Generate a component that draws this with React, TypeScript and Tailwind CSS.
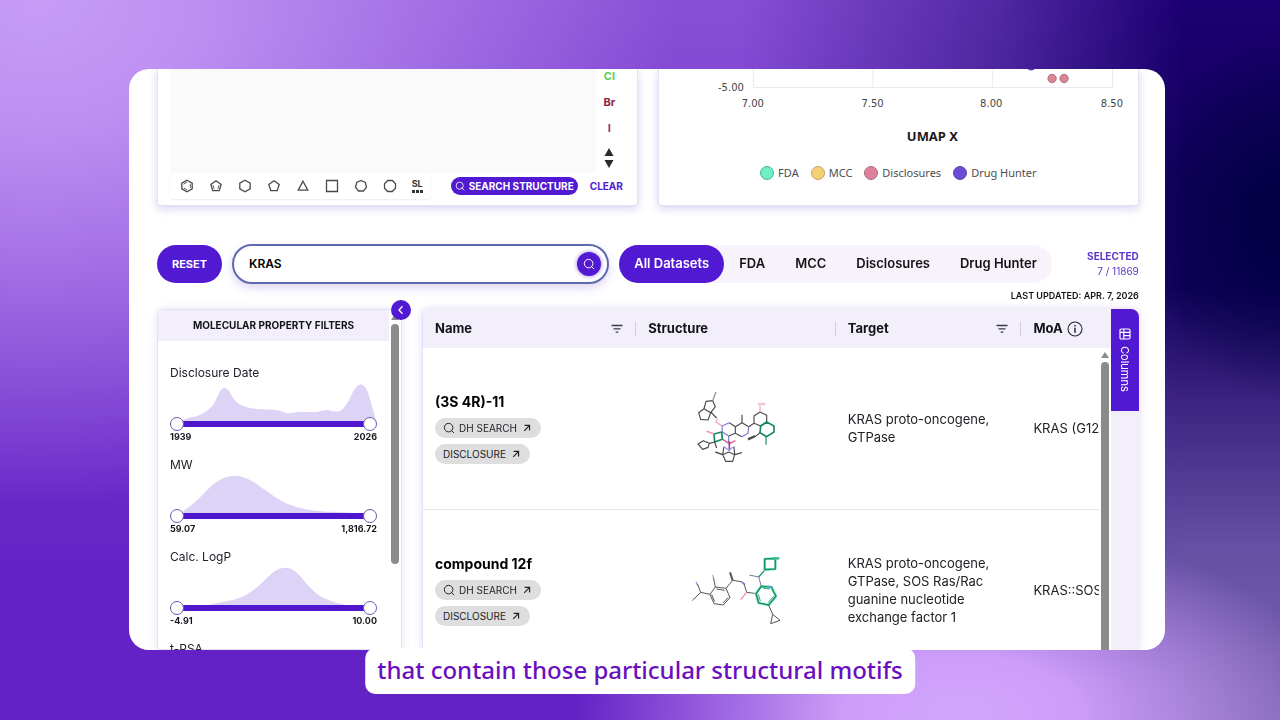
import { useState } from 'react';
import type { ReactNode } from 'react';

type Filter = {
  label: string;
  min: string;
  max: string;
  curve: string;
};

const filters: Filter[] = [
  {
    label: 'Disclosure Date',
    min: '1939',
    max: '2026',
    curve:
      'M90 246L95 238Q120 228 140 226Q170 214 187 195Q196 182 206 158Q214 141 223 141Q233 141 242 158Q252 178 266 188Q284 200 320 204L370 206Q392 208 405 215Q420 219 440 213L500 213Q520 207 535 207Q550 213 568 211Q580 208 597 178Q617 130 633 130Q648 130 660 174Q674 226 681 246Z'
  },
  {
    label: 'MW',
    min: '59.07',
    max: '1,816.72',
    curve:
      'M90 246L96 236C120 222 135 208 155 188C185 155 215 128 253 128C290 128 320 152 355 178C385 200 410 214 440 222C480 234 520 236 560 237L665 242L665 246Z'
  },
  {
    label: 'Calc. LogP',
    min: '-4.91',
    max: '10.00',
    curve:
      'M90 246L175 240C200 234 235 230 265 220C295 210 320 190 350 160C370 140 385 128 406 128C425 128 438 138 455 158C475 182 490 200 515 216C545 230 565 236 590 240L665 244L665 246Z'
  }
];

const legend = [
  { label: 'FDA', dot: 'bg-[#6ff0c4] border-[#4faf95]' },
  { label: 'MCC', dot: 'bg-[#f5cf74] border-[#c2a565]' },
  { label: 'Disclosures', dot: 'bg-[#de829c] border-[#a86f80]' },
  { label: 'Drug Hunter', dot: 'bg-[#6b4bd6] border-[#5a45a8]' }
];

const datasets = ['All Datasets', 'FDA', 'MCC', 'Disclosures', 'Drug Hunter'];

const rings: { name: string; shape: ReactNode }[] = [
  {
    name: 'Benzene',
    shape: (
      <>
        <path d="M7 1.2l5.2 2.9v5.800L7 12.800 1.800 9.900V4.100z" />
        <path d="M7 3.200L3.700 5.100M3.700 8.900l3.300 1.900M10.300 5.200v3.600" strokeWidth="0.900" />
      </>
    )
  },
  {
    name: 'Cyclopentadiene',
    shape: (
      <>
        <path d="M7 1.800l5.200 3.700-2 6.200H3.800l-2-6.200z" />
        <path d="M3.900 6.200l1.200 3.700M10.100 6.200l-1.200 3.700" strokeWidth="0.900" />
      </>
    )
  },
  { name: 'Cyclohexane', shape: <path d="M7 1.200l5.200 2.900v5.800L7 12.800 1.800 9.900V4.100z" /> },
  { name: 'Cyclopentane', shape: <path d="M7 1.800l5.200 3.700-2 6.200H3.800l-2-6.200z" /> },
  { name: 'Cyclopropane', shape: <path d="M7 2.200l4.800 9H2.200z" /> },
  { name: 'Cyclobutane', shape: <path d="M1.500 1.500h11v11h-11z" /> },
  { name: 'Cycloheptane', shape: <path d="M7 1.500l4.300 2 1.200 4.600-3 3.900h-5l-3-3.900 1.200-4.600z" /> },
  { name: 'Cyclooctane', shape: <path d="M4.700 1.500h4.600l3.200 3.200v4.600l-3.200 3.200H4.700L1.500 9.300V4.700z" /> }
];

function SearchIcon({ className }: { className: string }) {
  return (
    <svg viewBox="0 0 16 16" className={className} fill="none" stroke="currentColor" strokeWidth="1.3">
      <circle cx="7.500" cy="7.500" r="5.700" />
      <path d="M10.800 10.800l3.700 3.700" strokeLinecap="round" />
    </svg>
  );
}

function ArrowIcon() {
  return (
    <svg viewBox="0 0 10 10" className="h-2 w-2" fill="none" stroke="currentColor" strokeWidth="1.5">
      <path d="M1.500 8.500L8 2M2 1.800h6.200V8" />
    </svg>
  );
}

function FilterIcon() {
  return (
    <svg viewBox="0 0 12 10" className="h-2.5 w-3" stroke="#3a3844" strokeWidth="1.300">
      <path d="M0.500 1.500h11M2.500 4.800h7M4.700 8.100h2.600" />
    </svg>
  );
}

function MoleculeOne() {
  return (
    <svg viewBox="-12 0 360 300" className="mx-auto w-[120px]" fill="none" stroke="#4a4a50" strokeWidth="3.500" strokeLinejoin="round">
      <path d="M98 68L78 70 72 92 92 104 106 86zM72 92L56 104 62 124 84 126 92 104" />
      <path d="M92 102L110 120" />
      <path d="M98 68L108 42" stroke="#8d8da0" />
      <path d="M112 122L108 132 126 144" stroke="#f0a3ad" />
      <path d="M148 134L166 146 186 134 206 146M166 146V166M146 174L166 166 186 176" />
      <path d="M148 134L126 144 127 162 146 174" stroke="#7d78dc" />
      <path d="M206 146L204 166 186 176" stroke="#7d78dc" />
      <path d="M186 134V110M206 146L222 136M222 136V114L240 102 260 112V132L242 144 222 136" />
      <path d="M240 102V84" stroke="#f0a3ad" />
      <path d="M234 78H256" stroke="#f6c3ca" strokeWidth="8" />
      <path d="M242 144L260 132 282 144V162L260 176 240 164z" stroke="#168a63" strokeWidth="5" />
      <path d="M258 176V200" stroke="#168a63" />
      <path d="M240 164L226 176" />
      <path d="M226 174L204 184" strokeWidth="7" />
      <path d="M102 168L125 162 127 184 104 192z" stroke="#168a63" strokeWidth="5" />
      <path d="M102 168L80 160" stroke="#ee9aa6" strokeWidth="5" />
      <path d="M104 192L88 196M104 192L110 210M88 196L70 188 54 198 68 214 84 208z" />
      <path d="M146 174V194" stroke="#7d78dc" />
      <path d="M128 184L148 197 166 188" stroke="#e05a86" strokeWidth="4" />
      <path d="M148 190V218" stroke="#8e46ac" strokeWidth="5" />
      <path d="M128 230L132 206M128 230L137 250H158L164 230 162 206M146 222L128 230M146 222L164 230" />
      <path d="M128 230L106 222M164 230L186 224" strokeWidth="4" />
      <path d="M132 206L146 216 162 206" stroke="#9a90e0" />
    </svg>
  );
}

function MoleculeTwo() {
  return (
    <svg viewBox="-12 0 360 270" className="mx-auto w-[120px]" fill="none" stroke="#55555a" strokeWidth="3" strokeLinejoin="round">
      <path d="M106 126L138 130 150 158 130 180 102 176 90 148z" />
      <path d="M109 132L134 136M145 157L129 174M104 170L95 149" />
      <path d="M106 126L100 96M90 148L62 142M62 142L52 116M62 142L40 164" />
      <path d="M52 122L48 110M44 158L36 168M101 100L98 90" stroke="#9b8ad0" />
      <path d="M138 130L158 106" />
      <path d="M158 106L150 82" strokeWidth="6" />
      <path d="M158 106L184 110" />
      <path d="M184 110L194 118" stroke="#7b76d9" strokeWidth="5" />
      <path d="M192 116L200 142 230 146" />
      <path d="M200 142L182 164" stroke="#eb91a0" strokeWidth="4" />
      <path d="M244 124L274 126 288 154 266 180 236 174 228 146z" stroke="#bdf3df" strokeWidth="9" />
      <path d="M244 124L274 126 288 154 266 180 236 174 228 146z" stroke="#12966a" strokeWidth="5" />
      <path d="M250 130L270 132M281 154L264 173M241 168L235 148" stroke="#2ca37b" />
      <path d="M262 124L278 128" stroke="#4aa4c4" strokeWidth="5" />
      <path d="M244 124L236 96M236 96L208 90" stroke="#7d70ad" />
      <path d="M236 96L256 74" stroke="#12966a" strokeWidth="4" />
      <path d="M254 42L286 40V72L254 74z" stroke="#bdf3df" strokeWidth="9" />
      <path d="M254 42L286 40V72L254 74z" stroke="#12966a" strokeWidth="5" />
      <path d="M280 40H298" stroke="#3fc0a0" strokeWidth="8" />
      <path d="M266 180L278 208M278 208L300 226 272 236z" />
    </svg>
  );
}

const compounds = [
  {
    name: '(3S 4R)-11',
    structure: <MoleculeOne />,
    target: 'KRAS proto-oncogene, GTPase',
    moa: 'KRAS (G12'
  },
  {
    name: 'compound 12f',
    structure: <MoleculeTwo />,
    target: 'KRAS proto-oncogene, GTPase, SOS Ras/Rac guanine nucleotide exchange factor 1',
    moa: 'KRAS::SOS'
  }
];

const thumb =
  'pointer-events-none absolute inset-0 h-full w-full appearance-none bg-transparent outline-none [&::-webkit-slider-thumb]:pointer-events-auto [&::-webkit-slider-thumb]:h-3.5 [&::-webkit-slider-thumb]:w-3.5 [&::-webkit-slider-thumb]:appearance-none [&::-webkit-slider-thumb]:rounded-full [&::-webkit-slider-thumb]:border [&::-webkit-slider-thumb]:border-solid [&::-webkit-slider-thumb]:border-[#6c5aa8] [&::-webkit-slider-thumb]:bg-white';

function RangeFilter({ filter }: { filter: Filter }) {
  return (
    <div className="h-[92px]">
      <div className="text-xs leading-4 text-[#222029]">{filter.label}</div>
      <svg viewBox="60 126 621 120" preserveAspectRatio="none" className="mt-0.5 block h-10 w-full">
        <path d={filter.curve} fill="#ddd3f6" />
      </svg>
      <div className="relative -mt-1.5 h-3.5">
        <div className="absolute inset-x-1 top-1 h-1.5 bg-[#4f17cd]" />
        <input type="range" aria-label={`${filter.label} minimum`} min={0} max={100} defaultValue={0} className={thumb} />
        <input type="range" aria-label={`${filter.label} maximum`} min={0} max={100} defaultValue={100} className={thumb} />
      </div>
      <div className="flex justify-between text-[9px] leading-3 font-bold text-[#17151c]">
        <span>{filter.min}</span>
        <span>{filter.max}</span>
      </div>
    </div>
  );
}

function StructurePanel() {
  return (
    <section className="flex min-w-0 flex-col rounded-b border border-t-0 border-[#e6e0f5] bg-white px-3 pb-1.5 shadow-[0_3px_10px_rgba(90,50,200,0.22)]">
      <div className="flex h-[104px] pr-0.5">
        <div className="flex-1 bg-[#fafafa]" />
        <div className="flex w-[27px] flex-col items-center text-[11px] leading-[26px] font-bold">
          <button type="button" className="-mt-1.5 text-[#56cf58]">Cl</button>
          <button type="button" className="text-[#8b2340]">Br</button>
          <button type="button" className="text-[#77406f]">I</button>
          <svg viewBox="0 0 10 22" className="mt-1.5 h-[22px] w-2.5" fill="#2b2b2b">
            <path d="M5 1l4.500 8h-9zM5 21l4.500-8h-9z" />
          </svg>
        </div>
      </div>
      <div className="flex items-center">
        <div className="flex h-[26px] flex-1 items-center justify-between rounded-sm bg-white pr-2 pl-2.5 shadow-[0_1px_2px_rgba(0,0,0,0.08)]">
          {rings.map((ring) => (
            <button key={ring.name} type="button" aria-label={ring.name}>
              <svg viewBox="0 0 14 14" className="h-3.5 w-3.5" fill="none" stroke="#4a4a4a" strokeWidth="1.300">
                {ring.shape}
              </svg>
            </button>
          ))}
          <button type="button" className="flex flex-col items-center text-[9px] leading-2 font-bold text-[#333]">
            SL
            <span className="mt-0.5 flex gap-px">
              <span className="h-[3px] w-[3px] bg-[#333]" />
              <span className="h-[3px] w-[3px] bg-[#333]" />
              <span className="h-[3px] w-[3px] bg-[#333]" />
            </span>
          </button>
        </div>
        <button
          type="button"
          className="ml-5 flex h-[18px] items-center gap-1 rounded-full bg-[#5119d2] px-1 text-[10px] font-bold text-white"
        >
          <SearchIcon className="h-2.5 w-2.5" />
          SEARCH STRUCTURE
        </button>
        <button type="button" className="ml-3 pr-0.5 text-[10px] font-bold text-[#5119d2]">
          CLEAR
        </button>
      </div>
    </section>
  );
}

function UmapPanel() {
  return (
    <section className="min-w-0 rounded-b border border-t-0 border-[#e6e0f5] bg-white shadow-[0_3px_10px_rgba(90,50,200,0.22)]">
      <svg viewBox="0 0 480 90" className="block w-full" fontFamily="'DejaVu Sans', sans-serif" fontSize="10" fill="#444">
        <path d="M94.500 0V18.500M214.500 0V18.500M334.500 0V18.500M454.500 0V18.500M94.500 18.500H454.500" stroke="#ebebee" fill="none" />
        <circle cx="373" cy="-3" r="4.500" fill="#5a45c4" />
        <circle cx="394" cy="9.500" r="4.200" fill="#dc8394" stroke="#9c6271" strokeWidth="0.800" />
        <circle cx="406" cy="9.500" r="4.200" fill="#dc8394" stroke="#9c6271" strokeWidth="0.800" />
        <text x="85" y="22" textAnchor="end">-5.00</text>
        <text x="94" y="38" textAnchor="middle">7.00</text>
        <text x="214" y="38" textAnchor="middle">7.50</text>
        <text x="333" y="38" textAnchor="middle">8.00</text>
        <text x="454" y="38" textAnchor="middle">8.50</text>
        <text x="274" y="72" textAnchor="middle" fontFamily="'Noto Sans', sans-serif" fontSize="13" fontWeight="700" fill="#1b1b1f">
          UMAP X
        </text>
      </svg>
      <ul className="flex justify-center gap-3 pt-1.5 font-['Noto_Sans',sans-serif] text-[11px] leading-4 text-[#4c4c52]">
        {legend.map((item) => (
          <li key={item.label} className="flex items-center gap-1">
            <span className={`h-3.5 w-3.5 rounded-full border ${item.dot}`} />
            {item.label}
          </li>
        ))}
      </ul>
    </section>
  );
}

function Controls() {
  const [active, setActive] = useState('All Datasets');

  return (
    <div className="mt-[38px] flex items-center">
      <button
        type="button"
        className="h-[38px] w-[65px] shrink-0 rounded-full bg-[#5119d2] text-[11px] font-bold text-white"
      >
        RESET
      </button>
      <div className="ml-2.5 flex h-10 min-w-0 flex-1 items-center rounded-full border-2 border-[#6069ae] bg-white pr-1.5 pl-[15px] shadow-[0_4px_10px_rgba(90,50,200,0.2)]">
        <input
          type="text"
          aria-label="Search compounds"
          autoFocus
          defaultValue="KRAS"
          className="min-w-0 flex-1 bg-transparent text-xs font-semibold text-black outline-none"
        />
        <button
          type="button"
          aria-label="Search"
          className="flex h-6 w-6 items-center justify-center rounded-full bg-[#5119d2] text-white shadow-[0_0_4px_rgba(81,25,210,0.6)]"
        >
          <SearchIcon className="h-3 w-3" />
        </button>
      </div>
      <div className="ml-2.5 flex h-[38px] shrink-0 rounded-full bg-[#f8f3fa]">
        {datasets.map((name) => (
          <button
            key={name}
            type="button"
            onClick={() => setActive(name)}
            className={
              name === active
                ? 'rounded-full bg-[#5119d2] px-[15px] text-[13px] font-semibold text-white'
                : 'px-[15px] text-[13px] font-semibold text-[#131217]'
            }
          >
            {name}
          </button>
        ))}
      </div>
      <div className="w-[87px] shrink-0 text-right text-[10px] leading-[15px] text-[#5b35c4]">
        <div className="font-bold">SELECTED</div>
        <div>7 / 11869</div>
      </div>
    </div>
  );
}

function FilterPanel() {
  return (
    <aside className="relative w-[245px] shrink-0 rounded-t-md border border-[#e6e0f5] bg-white pr-3 shadow-[0_0_8px_rgba(90,50,200,0.14)]">
      <h2 className="rounded-tl-md bg-[#f2effb] py-2 text-center text-[10px] leading-[15px] font-bold text-[#131217]">
        MOLECULAR PROPERTY FILTERS
      </h2>
      <div className="px-3 pt-6">
        {filters.map((filter) => (
          <RangeFilter key={filter.label} filter={filter} />
        ))}
        <div className="text-xs leading-4 text-[#222029]">t-PSA</div>
      </div>
      <div className="absolute top-1 right-0.5 flex w-2 flex-col items-center">
        <svg viewBox="0 0 8 6" className="h-1.5 w-2" fill="#8b8b8b">
          <path d="M4 0l4 6H0z" />
        </svg>
        <div className="mt-1 h-[240px] w-2 rounded-full bg-[#8b8b8b]" />
      </div>
      <button
        type="button"
        aria-label="Collapse filters"
        className="absolute -top-2.5 -right-2.5 flex h-5 w-5 items-center justify-center rounded-full bg-[#5119d2] text-white"
      >
        <svg viewBox="0 0 10 10" className="h-2.5 w-2.5" fill="none" stroke="currentColor" strokeWidth="1.300">
          <path d="M6.500 1.200L3 5l3.500 3.800" />
        </svg>
      </button>
    </aside>
  );
}

function HeaderCell({ title, icon, divider = true }: { title: string; icon?: ReactNode; divider?: boolean }) {
  return (
    <th className="h-[39px] p-0 text-left font-bold">
      <div className={divider ? 'flex h-3.5 items-center justify-between border-r border-[#d2cddd] pr-3 pl-3' : 'flex h-3.5 items-center gap-1 pl-3'}>
        {title}
        {icon}
      </div>
    </th>
  );
}

function CompoundTable() {
  return (
    <div className="flex min-w-0 flex-1 rounded-t-md border-l border-[#e6e0f5] bg-white shadow-[0_0_8px_rgba(90,50,200,0.18)]">
      <div className="relative min-w-0 flex-1 overflow-hidden rounded-tl-md">
        <table className="w-full table-fixed border-collapse">
          <colgroup>
            <col className="w-[31%]" />
            <col className="w-[29%]" />
            <col className="w-[27%]" />
            <col />
          </colgroup>
          <thead className="bg-[#f2effb] text-[13px] text-[#131217]">
            <tr>
              <HeaderCell title="Name" icon={<FilterIcon />} />
              <HeaderCell title="Structure" />
              <HeaderCell title="Target" icon={<FilterIcon />} />
              <HeaderCell
                title="MoA"
                divider={false}
                icon={
                  <svg viewBox="0 0 16 16" className="h-4 w-4" fill="none" stroke="#26242c" strokeWidth="1.100">
                    <circle cx="8" cy="8" r="7" />
                    <path d="M8 6.800v5M8 4v1.400" strokeWidth="1.500" />
                  </svg>
                }
              />
            </tr>
          </thead>
          <tbody className="text-[13px] leading-[18px] text-[#222127]">
            {compounds.map((row) => (
              <tr key={row.name} className="h-[161px] border-b border-[#e6e4ec]">
                <td className="pl-3">
                  <div className="text-sm font-bold text-black">{row.name}</div>
                  <div className="mt-1.5 flex flex-col items-start gap-1.5 text-[10px] text-[#222127]">
                    <a href="#search" className="flex h-5 items-center gap-1 rounded-full bg-[#dededf] pr-2.5 pl-2">
                      <SearchIcon className="h-3 w-3" />
                      DH SEARCH
                      <span className="ml-0.5">
                        <ArrowIcon />
                      </span>
                    </a>
                    <a href="#disclosure" className="flex h-5 items-center gap-1.5 rounded-full bg-[#dededf] pr-2.5 pl-2">
                      DISCLOSURE
                      <ArrowIcon />
                    </a>
                  </div>
                </td>
                <td>{row.structure}</td>
                <td className="pr-6 pl-3">{row.target}</td>
                <td className="overflow-hidden pl-3 whitespace-nowrap">{row.moa}</td>
              </tr>
            ))}
          </tbody>
        </table>
        <div className="absolute top-[39px] right-0 bottom-0 flex w-3 flex-col items-center bg-white pt-1">
          <svg viewBox="0 0 8 6" className="h-1.5 w-2 shrink-0" fill="#8b8b8b">
            <path d="M4 0l4 6H0z" />
          </svg>
          <div className="mt-1 w-2 flex-1 rounded-t-full bg-[#8b8b8b]" />
        </div>
      </div>
      <div className="w-7 shrink-0 rounded-tr-lg bg-[#f2effb]">
        <button
          type="button"
          className="flex h-[102px] w-full items-center justify-center gap-1.5 rounded-tr-lg bg-[#5119d2] text-[11px] text-white [writing-mode:vertical-rl]"
        >
          <svg viewBox="0 0 12 12" className="h-3 w-3" fill="none" stroke="currentColor" strokeWidth="1.200">
            <rect x="1" y="1" width="10" height="10" rx="1.200" />
            <path d="M1 4.300h10M4.800 1v10M4.800 7.600H11" />
          </svg>
          Columns
        </button>
      </div>
    </div>
  );
}

// Soft colour fields behind the card
function Backdrop() {
  return (
    <div className="absolute inset-0 bg-[radial-gradient(ellipse_50%_70%_at_3%_0%,#c79cf7_0%,#bd8ff2_25%,transparent_100%),linear-gradient(180deg,#874fd6_0%,#6322c6_80%)]">
      <div className="absolute inset-y-0 right-0 w-[42%] bg-[linear-gradient(180deg,#1c0072_0%,#0e0058_28%,#0e0058_40%,#3a2280_55%,#6450a4_76%,#7a62ae_100%)] [mask-image:linear-gradient(to_right,transparent,rgba(0,0,0,0.5)_48%,black_82%)]" />
      <div className="absolute inset-y-0 right-0 w-[10%] bg-[radial-gradient(ellipse_100%_26%_at_100%_30%,#020042_0%,transparent_100%)]" />
      <div className="absolute inset-0 bg-[radial-gradient(ellipse_30%_26%_at_75%_99%,#d2a5fb_0%,#cd9ef9_30%,transparent_100%)]" />
    </div>
  );
}

export default function App() {
  return (
    <div className="relative flex h-screen flex-col overflow-hidden pt-[69px] pr-[9%] pb-[70px] pl-[10%] font-[Inter,sans-serif]">
      <Backdrop />
      <main className="relative ml-px flex min-h-0 flex-1 flex-col overflow-hidden rounded-[20px] bg-white pr-[26px] pl-7">
        <div className="grid shrink-0 grid-cols-2 gap-5">
          <StructurePanel />
          <UmapPanel />
        </div>
        <Controls />
        <p className="mt-1.5 mb-[7px] text-right text-[9px] leading-3 font-semibold text-[#131217]">LAST UPDATED: APR. 7, 2026</p>
        <div className="flex min-h-0 flex-1 gap-5">
          <FilterPanel />
          <CompoundTable />
        </div>
      </main>
      <p className="absolute bottom-[26px] left-1/2 -translate-x-1/2 rounded-[10px] bg-white px-3 pt-1.5 pb-2 font-['Noto_Sans',sans-serif] text-2xl leading-8 font-medium whitespace-nowrap text-[#6a0fc0]">
        that contain those particular structural motifs
      </p>
    </div>
  );
}
